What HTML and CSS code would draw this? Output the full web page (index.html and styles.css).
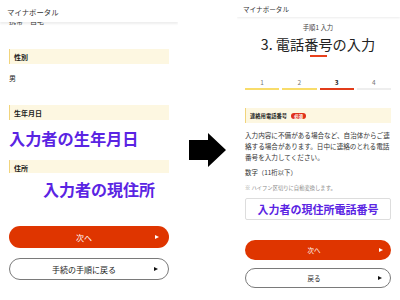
FILE: index.html
```html
<!DOCTYPE html>
<html lang="ja">
<head>
  <meta charset="UTF-8" />
  <title>マイナポータル</title>
  <link rel="stylesheet" href="styles.css">
</head>
<body>

<div class="screen screen-left">
  <div class="topbar">マイナポータル</div>
  <div class="page">
    <div class="cut">携帯　自宅</div>

    <div class="label">性別</div>
    <div class="value">男</div>

    <div class="label label-gap">生年月日</div>
    <div class="big">入力者の生年月日</div>

    <div class="label label-addr">住所</div>
    <div class="big big-addr">入力者の現住所</div>

    <div class="btn btn-main">
      <span></span><span>次へ</span><i class="tri"></i>
    </div>
    <div class="btn btn-line">
      <span></span><span>手続の手順に戻る</span><i class="tri"></i>
    </div>
  </div>
</div>

<div class="middle">
  <svg width="37" height="34" viewBox="0 0 37 34">
    <polygon points="0,7 19,7 19,0 37,17 19,34 19,27 0,27" fill="#000"/>
  </svg>
</div>

<div class="screen screen-right">
  <div class="topbar small">マイナポータル</div>
  <div class="page">
    <div class="sub">手順1 入力</div>
    <div class="title">3. 電話番号の入力</div>
    <div class="underline"></div>

    <div class="steps">
      <div class="step done"><span>1</span><b></b></div>
      <div class="step done"><span>2</span><b></b></div>
      <div class="step now"><span>3</span><b></b></div>
      <div class="step"><span>4</span><b></b></div>
    </div>

    <div class="field">連絡用電話番号<span class="badge">必須</span></div>
    <div class="desc">入力内容に不備がある場合など、自治体からご連絡する場合があります。日中に連絡のとれる電話番号を入力してください。</div>
    <div class="hint">数字（11桁以下）</div>
    <div class="note">※ ハイフン区切りに自動変換します。</div>
    <div class="input">入力者の現住所電話番号</div>

    <div class="btn btn-main btn-s">
      <span></span><span>次へ</span><i class="tri"></i>
    </div>
    <div class="btn btn-line btn-s btn-s2">
      <span></span><span>戻る</span><i class="tri"></i>
    </div>
  </div>
</div>

</body>
</html>
```

FILE: styles.css
```css
body {
  margin: 0;
  width: 400px;
  height: 300px;
  display: flex;
  background: #fff;
  color: #222;
  font-family: "Noto Sans CJK JP", "Noto Sans", sans-serif;
  overflow: hidden;
}
.screen {
  height: 300px;
  display: flex;
  flex-direction: column;
  overflow: hidden;
}
.screen-left {
  width: 178px;
}
.screen-right {
  width: 163px;
}
.middle {
  flex: 1;
  display: flex;
  align-items: center;
  justify-content: center;
}
.topbar {
  height: 22px;
  flex-shrink: 0;
  display: flex;
  align-items: center;
  padding-left: 7px;
  font-size: 7.4px;
  color: #333;
  background: #fff;
  box-shadow: 0 2px 2px rgba(0, 0, 0, 0.07);
  position: relative;
  z-index: 1;
}
.topbar.small {
  height: 17px;
  padding-left: 6px;
  font-size: 6.6px;
  box-shadow: 0 1px 2px rgba(0, 0, 0, 0.08);
}
.screen-left .page {
  padding: 0 9px;
}
.screen-right .page {
  padding: 0 9px 0 8px;
}
.cut {
  margin-top: -6px;
  height: 11px;
  line-height: 11px;
  font-size: 7px;
  color: #333;
  margin-bottom: 22px;
}
.label {
  height: 15px;
  display: flex;
  align-items: center;
  padding-left: 4px;
  background: #fdf7e1;
  border-left: 1px solid #f1d47c;
  font-size: 7px;
  font-weight: bold;
  color: #222;
}
.value {
  margin-top: 9px;
  height: 10px;
  line-height: 10px;
  font-size: 7px;
}
.label-gap {
  margin-top: 22px;
}
.big {
  margin-top: 9px;
  height: 19px;
  line-height: 19px;
  font-size: 16.2px;
  font-weight: bold;
  color: #5a24e3;
  white-space: nowrap;
}
.label-addr {
  margin-top: 12px;
}
.big-addr {
  margin-top: -2px;
  height: 22px;
  padding: 5px 0 0 34px;
  line-height: 22px;
  background: #fff;
  font-size: 16px;
}
.btn {
  display: grid;
  grid-template-columns: 1fr auto 1fr;
  align-items: center;
  height: 22px;
  box-sizing: border-box;
  border-radius: 12px;
  font-size: 8px;
  padding-right: 10px;
}
.btn .tri {
  justify-self: end;
  width: 0;
  height: 0;
  border-left: 4px solid;
  border-top: 2.5px solid transparent;
  border-bottom: 2.5px solid transparent;
}
.btn-main {
  margin-top: 26px;
  background: #df3500;
  color: #fff;
}
.btn-line {
  margin-top: 10px;
  border: 1px solid #7a7a7a;
  color: #222;
}
.btn-line .tri {
  border-left-color: #111;
}
.sub {
  margin-top: 6px;
  height: 10px;
  line-height: 10px;
  font-size: 6.4px;
  text-align: center;
  color: #444;
}
.title {
  margin-top: 3px;
  height: 16px;
  line-height: 16px;
  font-size: 14.2px;
  text-align: center;
  color: #222;
  white-space: nowrap;
}
.underline {
  width: 17px;
  height: 2px;
  margin: 3px auto 0;
  background: #e8401c;
}
.steps {
  margin-top: 20px;
  display: grid;
  grid-template-columns: repeat(4, 1fr);
  gap: 3px;
}
.step {
  display: flex;
  flex-direction: column;
  align-items: center;
}
.step span {
  height: 10px;
  line-height: 10px;
  font-size: 6.5px;
  color: #777;
}
.step b {
  margin-top: 1px;
  width: 100%;
  height: 2px;
  background: #eee;
}
.step.done b {
  background: #f8dc6a;
}
.step.now span {
  color: #111;
  font-weight: bold;
}
.step.now b {
  background: #e23c1a;
}
.field {
  margin-top: 18px;
  height: 15px;
  display: flex;
  align-items: center;
  padding-left: 4px;
  background: #fdf7e1;
  border-left: 1px solid #f1d47c;
  font-size: 5.3px;
  font-weight: bold;
}
.badge {
  margin-left: 4px;
  padding: 0 3px;
  border-radius: 4px;
  background: #e0301a;
  color: #fff;
  font-size: 4.5px;
  line-height: 6px;
}
.desc {
  margin-top: 6.5px;
  font-size: 6.6px;
  line-height: 11px;
  color: #333;
}
.hint {
  margin-top: 4px;
  font-size: 6.4px;
  line-height: 11px;
  color: #333;
}
.note {
  margin-top: 5px;
  font-size: 5.3px;
  line-height: 11px;
  color: #888;
}
.input {
  margin-top: 4.5px;
  height: 22px;
  box-sizing: border-box;
  border: 1px solid #ddd;
  border-radius: 2px;
  display: flex;
  align-items: center;
  justify-content: center;
  font-size: 11px;
  font-weight: bold;
  color: #5a24e3;
}
.btn-s {
  height: 20px;
  margin-top: 20px;
  font-size: 6.5px;
  padding-right: 8px;
}
.btn-s2 {
  margin-top: 8px;
}
```
